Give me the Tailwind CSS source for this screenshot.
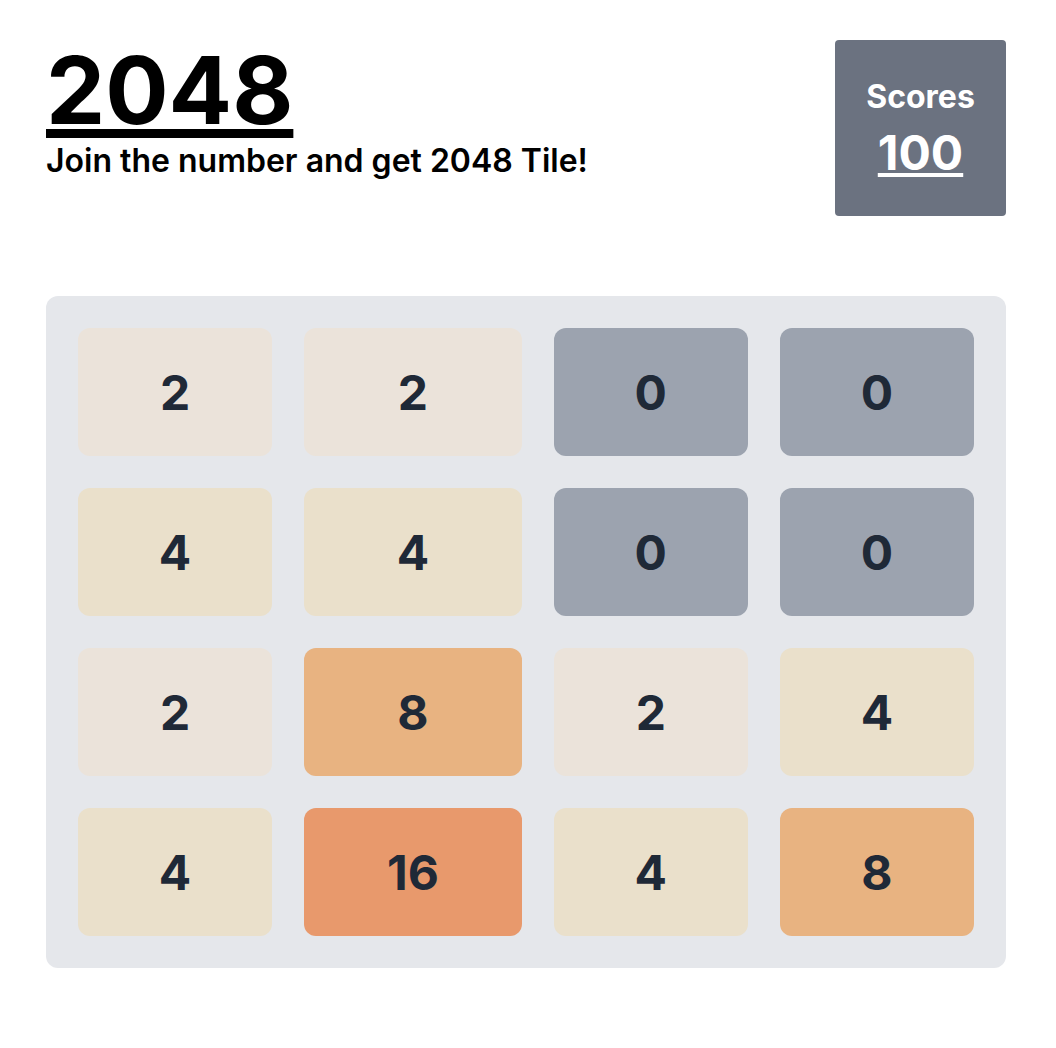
<!DOCTYPE html>
<html lang="en">
<head>
<meta charset="utf-8">
<title>2048</title>
<script src="https://cdn.jsdelivr.net/npm/@tailwindcss/browser@4"></script>
</head>
<body class="bg-white font-['Inter',sans-serif] font-bold text-black">
<main class="pl-[46px] pr-[50px] py-10">
  <header class="flex items-start justify-between">
    <div>
      <h1 class="text-[94px] leading-[100px] font-bold underline">2048</h1>
      <p class="text-[32px] leading-[42px] font-semibold">Join the number and get 2048 Tile!</p>
    </div>
    <section class="flex h-44 w-[171px] flex-col items-center justify-center rounded-sm bg-[#6b7280] pt-[10px] text-white">
      <h2 class="text-[32px] leading-10 font-bold">Scores</h2>
      <p class="text-5xl leading-[72px] font-bold underline">100</p>
    </section>
  </header>
  <table class="mt-20 w-full border-separate border-spacing-8 rounded-xl bg-[#e5e7eb] text-center text-5xl text-[#1f2937]">
    <tbody>
      <tr class="h-32 *:rounded-xl *:px-16 *:pt-[2px] *:pb-0"><td class="bg-[#ebe3da]">2</td><td class="bg-[#ebe3da]">2</td><td class="bg-[#9ca3af]">0</td><td class="bg-[#9ca3af]">0</td></tr>
      <tr class="h-32 *:rounded-xl *:px-16 *:pt-[2px] *:pb-0"><td class="bg-[#eae0cb]">4</td><td class="bg-[#eae0cb]">4</td><td class="bg-[#9ca3af]">0</td><td class="bg-[#9ca3af]">0</td></tr>
      <tr class="h-32 *:rounded-xl *:px-16 *:pt-[2px] *:pb-0"><td class="bg-[#ebe3da]">2</td><td class="bg-[#e8b381]">8</td><td class="bg-[#ebe3da]">2</td><td class="bg-[#eae0cb]">4</td></tr>
      <tr class="h-32 *:rounded-xl *:px-16 *:pt-[2px] *:pb-0"><td class="bg-[#eae0cb]">4</td><td class="bg-[#e8996c]">16</td><td class="bg-[#eae0cb]">4</td><td class="bg-[#e8b381]">8</td></tr>
    </tbody>
  </table>
</main>
</body>
</html>
